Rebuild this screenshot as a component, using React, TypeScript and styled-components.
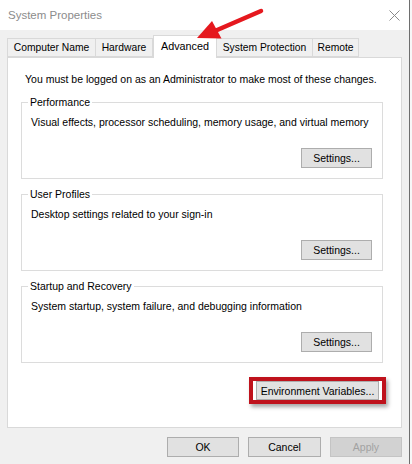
import React from "react";
import styled, { createGlobalStyle } from "styled-components";

const GlobalStyle = createGlobalStyle`
  html, body {
    margin: 0;
    padding: 0;
    width: 412px;
    height: 464px;
    overflow: hidden;
    background: #f7f7f7;
  }
  body {
    font-family: "Liberation Sans", Arial, sans-serif;
    font-size: 10.5px;
    color: #000;
  }
`;

const Window = styled.div`
  position: relative;
  width: 409px;
  height: 464px;
  background: #f0f0f0;
  border-right: 1px solid #6e6e6e;
  display: flex;
  flex-direction: column;
`;

const TitleBar = styled.div`
  height: 30px;
  flex: none;
  background: #ffffff;
  display: flex;
  align-items: center;
  justify-content: space-between;
  padding: 0 9px 0 8px;
`;

const Title = styled.span`
  font-size: 11.5px;
  color: #8c8c8c;
`;

const CloseIcon = styled.svg`
  width: 11px;
  height: 11px;
  margin-top: 1px;
`;

const Body = styled.div`
  flex: 1;
  display: flex;
  flex-direction: column;
  padding: 5px 7px 0 7px;
`;

const TabStrip = styled.div`
  display: flex;
  align-items: flex-end;
  height: 22px;
  position: relative;
  z-index: 1;
`;

const Tab = styled.div<{ $active?: boolean; $first?: boolean; $w: number }>`
  box-sizing: border-box;
  width: ${(p) => p.$w}px;
  height: ${(p) => (p.$active ? "23px" : "19px")};
  padding: ${(p) => (p.$active ? "0 0 3px" : "0")};
  display: flex;
  align-items: center;
  justify-content: center;
  background: ${(p) => (p.$active ? "#ffffff" : "#f0f0f0")};
  border: 1px solid #d9d9d9;
  border-left-width: ${(p) => (p.$first || p.$active ? "1px" : "0")};
  border-bottom: ${(p) => (p.$active ? "none" : "1px solid #d9d9d9")};
  margin-bottom: ${(p) => (p.$active ? "-1px" : "0")};
  font-size: ${(p) => (p.$active ? "10.8px" : "10.3px")};
  white-space: nowrap;
`;

const Panel = styled.div`
  height: 371px;
  box-sizing: border-box;
  background: #ffffff;
  border: 1px solid #d9d9d9;
  padding: 14px 18px 0 13px;
  display: flex;
  flex-direction: column;
`;

const Notice = styled.div`
  line-height: 14px;
  padding-left: 4px;
  margin-bottom: 9px;
  white-space: nowrap;
`;

const Groups = styled.div`
  display: flex;
  flex-direction: column;
  gap: 8px;
`;

const Group = styled.fieldset`
  margin: 0;
  padding: 0 10px 10px 9px;
  border: 1px solid #dcdcdc;
  min-inline-size: 0;
  display: flex;
  flex-direction: column;
`;

const Legend = styled.legend`
  padding: 0 2px;
  margin-left: -3px;
  line-height: 14px;
`;

const Description = styled.div`
  line-height: 14px;
  margin-top: 6px;
  white-space: nowrap;
`;

const ButtonRow = styled.div`
  display: flex;
  justify-content: flex-end;
  margin-top: 19px;
`;

const Button = styled.button<{ $w: number; $h?: number }>`
  width: ${(p) => p.$w}px;
  height: ${(p) => p.$h ?? 20}px;
  box-sizing: border-box;
  background: #e1e1e1;
  border: 1px solid #adadad;
  font-family: inherit;
  font-size: 10.5px;
  color: #000;
  padding: 0;
  margin: 0;
  white-space: nowrap;
  &:disabled {
    background: #d2d2d2;
    border-color: #c4c4c4;
    color: #a2a2a2;
  }
`;

const EnvRow = styled.div`
  display: flex;
  justify-content: flex-end;
  margin-top: 14px;
  margin-right: -3px;
`;

const Highlight = styled.div`
  border: 4px solid #bf121c;
  padding: 0 3px;
  box-shadow: 2px 3px 4px rgba(0, 0, 0, 0.35);
  display: flex;
`;

const Footer = styled.div`
  display: flex;
  justify-content: flex-end;
  gap: 9px;
  margin-top: 9px;
`;

const ArrowSvg = styled.svg`
  position: absolute;
  left: 0;
  top: 0;
  width: 412px;
  height: 60px;
  pointer-events: none;
  z-index: 5;
`;

const groups = [
  { title: "Performance", text: "Visual effects, processor scheduling, memory usage, and virtual memory" },
  { title: "User Profiles", text: "Desktop settings related to your sign-in" },
  { title: "Startup and Recovery", text: "System startup, system failure, and debugging information" },
];

const tabs: { label: string; w: number }[] = [
  { label: "Computer Name", w: 89 },
  { label: "Hardware", w: 57 },
  { label: "Advanced", w: 64 },
  { label: "System Protection", w: 96 },
  { label: "Remote", w: 46 },
];

export default function App() {
  return (
    <>
      <GlobalStyle />
      <Window>
        <TitleBar>
          <Title>System Properties</Title>
          <CloseIcon viewBox="0 0 11 11">
            <path d="M0.5 0.5 L10.5 10.5 M10.5 0.5 L0.5 10.5" stroke="#8a8a8a" strokeWidth="1" fill="none" />
          </CloseIcon>
        </TitleBar>
        <Body>
          <TabStrip>
            {tabs.map((t, i) => (
              <Tab key={t.label} $w={t.w} $first={i === 0} $active={t.label === "Advanced"}>
                {t.label}
              </Tab>
            ))}
          </TabStrip>
          <Panel>
            <Notice>You must be logged on as an Administrator to make most of these changes.</Notice>
            <Groups>
              {groups.map((g) => (
                <Group key={g.title}>
                  <Legend>{g.title}</Legend>
                  <Description>{g.text}</Description>
                  <ButtonRow>
                    <Button $w={71}>Settings...</Button>
                  </ButtonRow>
                </Group>
              ))}
            </Groups>
            <EnvRow>
              <Highlight>
                <Button $w={123} $h={19}>Environment Variables...</Button>
              </Highlight>
            </EnvRow>
          </Panel>
          <Footer>
            <Button $w={72}>OK</Button>
            <Button $w={73}>Cancel</Button>
            <Button $w={72} disabled>
              Apply
            </Button>
          </Footer>
        </Body>
        <ArrowSvg viewBox="0 0 412 60">
          <path d="M261 11 L216 30.5" stroke="#e5181e" strokeWidth="4.5" strokeLinecap="round" />
          <polygon points="197,38 212,21 221.5,38.5" fill="#e5181e" />
        </ArrowSvg>
      </Window>
    </>
  );
}
